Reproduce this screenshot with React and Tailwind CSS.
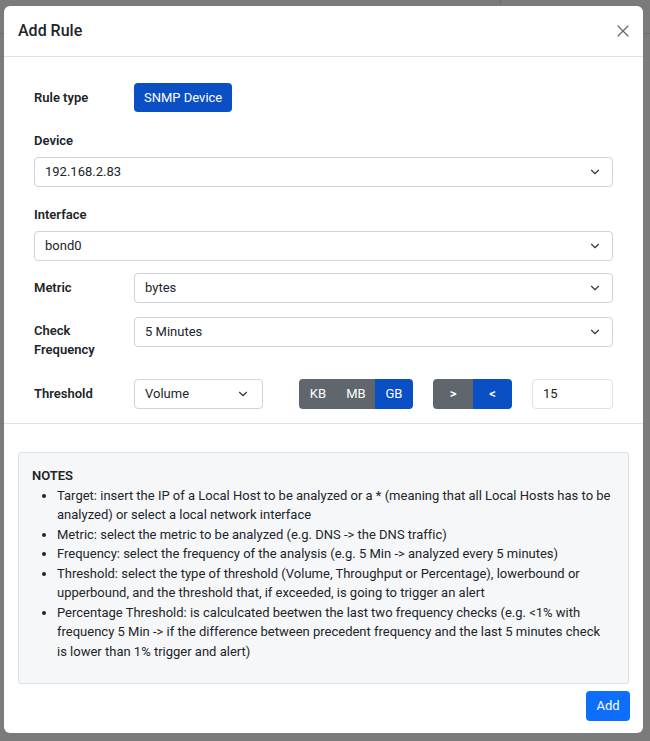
import { ChevronDown, X } from "lucide-react";

const FONT = { fontFamily: "Roboto, 'Noto Sans', sans-serif", fontVariantLigatures: "none" };

const Select = ({ value, className = "" }) => (
  <div
    className={`flex h-[30px] items-center justify-between rounded-[4px] border border-[#ced4da] bg-white pl-[10px] pr-[10px] text-[13px] text-[#212529] ${className}`}
  >
    <span>{value}</span>
    <ChevronDown size={14} strokeWidth={2} className="text-[#343a40]" />
  </div>
);

const NOTES = [
  "Target: insert the IP of a Local Host to be analyzed or a * (meaning that all Local Hosts has to be analyzed) or select a local network interface",
  "Metric: select the metric to be analyzed (e.g. DNS -> the DNS traffic)",
  "Frequency: select the frequency of the analysis (e.g. 5 Min -> analyzed every 5 minutes)",
  "Threshold: select the type of threshold (Volume, Throughput or Percentage), lowerbound or upperbound, and the threshold that, if exceeded, is going to trigger an alert",
  "Percentage Threshold: is calculcated beetwen the last two frequency checks (e.g. <1% with frequency 5 Min -> if the difference between precedent frequency and the last 5 minutes check is lower than 1% trigger and alert)",
];

export default function App() {
  return (
    <div className="relative min-h-[741px] overflow-hidden bg-[#7b7b7b]" style={FONT}>
      {/* faint page lines behind the backdrop */}
      <div className="absolute left-0 right-0 top-[33px] h-px bg-[#6e6e6e]" />
      <div className="absolute left-[500px] top-0 h-[33px] w-px bg-[#6e6e6e]" />

      <div className="relative ml-[4px] mt-[6px] w-[639px] rounded-[6px] bg-white">
        {/* header */}
        <div className="flex h-[51px] items-center justify-between border-b border-[#dee2e6] pl-[14px] pr-[10px]">
          <h5 className="text-[16px] font-medium text-[#212529]">Add Rule</h5>
          <X size={20} strokeWidth={1.5} className="text-[#6c6c6c]" />
        </div>

        {/* body */}
        <div className="border-b border-[#dee2e6] px-[30px] pb-[14px] pt-[26px] text-[13px] text-[#212529]">
          <div className="flex items-center">
            <label className="w-[100px] font-semibold">Rule type</label>
            <button className="h-[29px] rounded-[4px] bg-[#0b4fc4] px-[10px] text-[13px] text-white">
              SNMP Device
            </button>
          </div>

          <div className="mt-[19px] font-semibold leading-[19px]">Device</div>
          <Select value="192.168.2.83" className="mt-[7px]" />

          <div className="mt-[18px] font-semibold leading-[19px]">Interface</div>
          <Select value="bond0" className="mt-[7px]" />

          <div className="mt-[12px] flex items-center">
            <label className="w-[100px] font-semibold">Metric</label>
            <Select value="bytes" className="flex-1" />
          </div>

          <div className="mt-[14px] flex items-start">
            <label className="w-[100px] pt-[4px] font-semibold leading-[19px]">
              Check
              <br />
              Frequency
            </label>
            <Select value="5 Minutes" className="flex-1" />
          </div>

          <div className="mt-[20px] flex items-center">
            <label className="w-[100px] font-semibold">Threshold</label>
            <Select value="Volume" className="w-[129px] pr-[12px]" />
            <div className="ml-[36px] flex h-[30px] overflow-hidden rounded-[4px] text-white">
              <span className="flex w-[38px] items-center justify-center bg-[#5f666d]">KB</span>
              <span className="flex w-[38px] items-center justify-center bg-[#5f666d]">MB</span>
              <span className="flex w-[38px] items-center justify-center bg-[#0b4fc4]">GB</span>
            </div>
            <div className="ml-[20px] flex h-[30px] overflow-hidden rounded-[4px] font-semibold text-white">
              <span className="flex w-[40px] items-center justify-center bg-[#5f666d]">&gt;</span>
              <span className="flex w-[39px] items-center justify-center bg-[#0b4fc4]">&lt;</span>
            </div>
            <div className="ml-[20px] flex h-[30px] flex-1 items-center rounded-[4px] border border-[#dee2e6] pl-[10px]">
              15
            </div>
          </div>
        </div>

        {/* notes */}
        <div className="px-[14px] pt-[28px]">
          <div className="rounded-[3px] border border-[#dcdfe3] bg-[#f6f7f9] pb-[22px] pl-[13px] pr-[16px] pt-[13px] text-[13px] leading-[19.5px] text-[#212529]">
            <div className="font-semibold">NOTES</div>
            <ul className="list-disc pl-[25px]">
              {NOTES.map((n) => (
                <li key={n}>{n}</li>
              ))}
            </ul>
          </div>
        </div>

        {/* footer */}
        <div className="flex justify-end px-[13px] pb-[12px] pt-[7px]">
          <button className="h-[30px] w-[44px] rounded-[4px] bg-[#0d6efd] text-[13px] text-white">Add</button>
        </div>
      </div>
    </div>
  );
}
